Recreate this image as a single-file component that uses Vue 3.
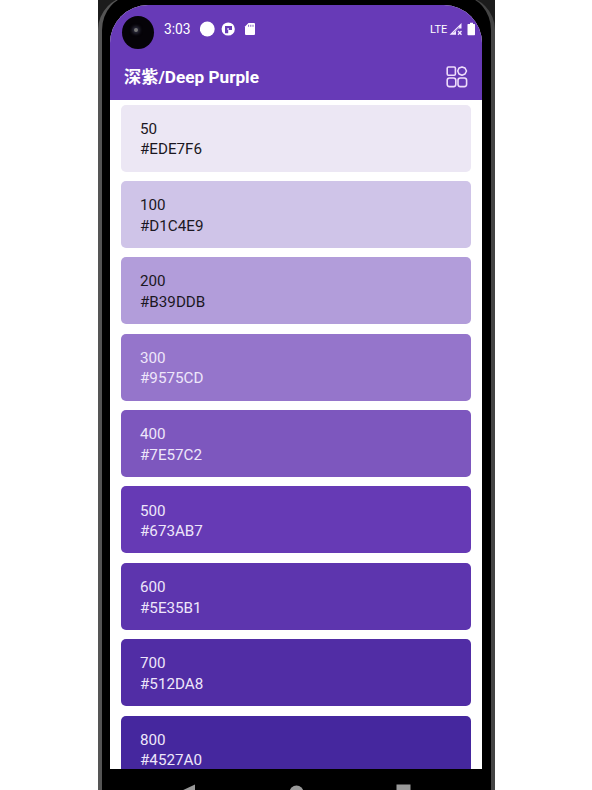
<template>
  <div class="stage">
    <div class="corners">
      <div class="phone">
        <div class="screen">
          <header class="top">
            <div class="status">
              <span class="camera"><i></i></span>
              <span class="time">3:03</span>
              <svg class="notices" width="56" height="16" viewBox="0 0 56 16">
                <circle cx="7.3" cy="8" r="7.4" fill="#fff" />
                <circle cx="28.2" cy="8" r="6.6" fill="#fff" />
                <path d="M25 5h7v4h-3.8v3.2H25z" fill="#673ab7" />
                <path d="M27.3 7.2h1.6v1.6h-1.6z" fill="#fff" />
                <path d="M48.5 2H54a1 1 0 0 1 1 1v10a1 1 0 0 1-1 1h-8a1 1 0 0 1-1-1V5.5z" fill="#fff" />
                <path d="M48.6 3.8v2M50.8 3.8v2M53 3.8v2" stroke="#673ab7" stroke-width=".8" />
              </svg>
              <span class="lte">LTE</span>
              <svg class="signal" width="28" height="14" viewBox="0 0 28 14">
                <path d="M.5 12.8L12.5 1v5.5H9L7 9v3.8z" fill="#f3e8ff" />
                <path d="M4.5 10.8L10 5.2" stroke="#8f6ccc" stroke-width=".8" />
                <path d="M9 9l3.5 3.8M12.5 9L9 12.8" stroke="#f3e8ff" stroke-width="1.3" />
                <path d="M18.5 2.6a.6.6 0 0 1 .6-.6H21V.7h3V2h1.4a.6.6 0 0 1 .6.6v10a.6.6 0 0 1-.6.6h-6.3a.6.6 0 0 1-.6-.6z" fill="#fff" />
              </svg>
            </div>
            <div class="title-bar">
              <h1>深紫/Deep Purple</h1>
              <svg width="22" height="22" viewBox="0 0 22 22" fill="none" stroke="#eedcfb" stroke-width="1.6">
                <rect x="1.2" y="1" width="8.2" height="8.2" rx="1.2" />
                <path d="M16 .9L19 2l1.5 3-1.5 3-3 1.3L13 8l-1.3-3L13 2z" stroke-linejoin="round" />
                <rect x="1.2" y="12" width="8.6" height="8.6" rx="2.3" />
                <rect x="12" y="12" width="8.6" height="8.6" rx="2.3" />
              </svg>
            </div>
          </header>
          <main class="list">
            <div
              v-for="item in shades"
              :key="item.name"
              class="card"
              :class="{ light: item.dark }"
              :style="{ background: item.fill }"
            >
              <span>{{ item.name }}</span>
              <span>{{ item.hex }}</span>
            </div>
          </main>
        </div>
        <nav class="nav">
          <svg width="373" height="22" viewBox="0 0 373 22" fill="#999">
            <path d="M85 15.5v14L70 22.5z" />
            <circle cx="186.5" cy="23.5" r="7" />
            <rect x="286.5" y="15.5" width="14" height="14" />
          </svg>
        </nav>
      </div>
    </div>
  </div>
</template>

<script setup>
const shades = [
  { name: "50", hex: "#EDE7F6", fill: "#ece7f4", dark: false },
  { name: "100", hex: "#D1C4E9", fill: "#cfc4e8", dark: false },
  { name: "200", hex: "#B39DDB", fill: "#b29dda", dark: false },
  { name: "300", hex: "#9575CD", fill: "#9575cb", dark: true },
  { name: "400", hex: "#7E57C2", fill: "#7d57be", dark: true },
  { name: "500", hex: "#673AB7", fill: "#663ab5", dark: true },
  { name: "600", hex: "#5E35B1", fill: "#5d35ae", dark: true },
  { name: "700", hex: "#512DA8", fill: "#512da5", dark: true },
  { name: "800", hex: "#4527A0", fill: "#45279e", dark: true },
];
</script>

<style>
body {
  background: #fff;
}
</style>

<style scoped>
.stage {
  width: 592px;
  height: 790px;
  overflow: hidden;
  font-family: Roboto, "Noto Sans CJK SC", sans-serif;
}
.corners {
  width: 397px;
  height: 790px;
  margin-left: 98px;
  overflow: hidden;
  background: linear-gradient(#1c1c1c 20px, #444 50px);
}
.phone {
  box-sizing: border-box;
  width: 397px;
  height: 794px;
  margin-top: -4px;
  padding: 9px 9px 0 7.5px;
  border: solid #444;
  border-width: 0 4px;
  border-left-color: #555;
  border-radius: 34px 34px 0 0;
  background: #000;
}
.screen {
  width: 372.5px;
  height: 763.5px;
  overflow: hidden;
  border-radius: 38px 38px 0 0;
  background: #fff;
}
.top {
  height: 95px;
  background: #673ab7;
  color: #fff;
}
.status {
  display: flex;
  align-items: center;
  height: 48px;
  padding-left: 12px;
}
.camera {
  display: flex;
  align-items: center;
  justify-content: center;
  width: 32px;
  height: 33px;
  margin-top: 6px;
  border-radius: 50%;
  background: #050308;
}
.camera i {
  width: 4px;
  height: 4px;
  margin: -4px 4px 0 0;
  border-radius: 50%;
  background: #777;
  box-shadow: 0 0 3px 2px #282838;
}
.time {
  width: 26px;
  margin-left: 10.5px;
  font-size: 13.8px;
}
.notices {
  margin-left: 10px;
}
.lte {
  margin-left: 174px;
  font-size: 11px;
}
.signal {
  margin-left: 1.5px;
}
.title-bar {
  display: flex;
  align-items: center;
  justify-content: space-between;
  height: 47px;
  padding: 0 14.5px 0 14.5px;
}
h1 {
  margin: -3px 0 0;
  font-size: 17.2px;
  font-weight: 700;
}
.list {
  padding: 4.5px 11px 0;
}
.card {
  box-sizing: border-box;
  display: flex;
  flex-direction: column;
  height: 67px;
  margin-bottom: 9.4px;
  padding: 14.2px 19.5px;
  border-radius: 5px;
  color: #1b1722;
  font-size: 15.2px;
  line-height: 20.5px;
}
.card.light {
  color: #eee6fa;
}
.nav {
  height: 22px;
}
.nav svg {
  display: block;
}
</style>
